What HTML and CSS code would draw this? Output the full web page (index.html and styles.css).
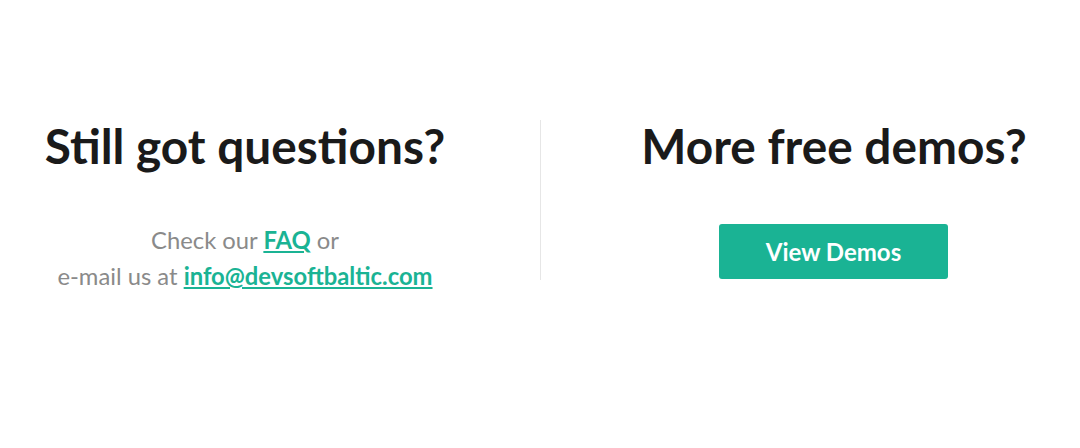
FILE: index.html
```html
<!DOCTYPE html>
<html>
<head>
<meta charset="utf-8">
<link rel="stylesheet" href="styles.css">
</head>
<body>
<section class="cta">
  <div class="col col-left">
    <h2 class="title">Still got questions?</h2>
    <p class="text">Check our <a href="#" class="link">FAQ</a> or<br>e-mail us at <a href="#" class="link">info@devsoftbaltic.com</a></p>
  </div>
  <div class="col col-right">
    <h2 class="title">More free demos?</h2>
    <a href="#" class="btn">View Demos</a>
  </div>
</section>
</body>
</html>
```
FILE: styles.css
```css
html, body {
  margin: 0;
  padding: 0;
  background: #fff;
}
body {
  font-family: Lato, "Open Sans", sans-serif;
  width: 1080px;
  height: 448px;
}
.cta {
  display: flex;
  padding-top: 120px;
}
.col {
  box-sizing: border-box;
  display: flex;
  flex-direction: column;
  align-items: center;
  text-align: center;
}
.col-left {
  width: 541px;
  padding-right: 50px;
  border-right: 1px solid #e6e6e6;
  height: 160px;
}
.col-right {
  flex: 1;
  padding-left: 47px;
}
.title {
  margin: 0;
  font-size: 47.8px;
  font-weight: 700;
  color: #1a1a1a;
  line-height: 52px;
}
.text {
  margin: 50px 0 0;
  font-size: 23.8px;
  line-height: 36px;
  color: #8a8a8a;
}
.link {
  color: #1ab394;
  font-weight: 700;
  text-decoration: underline;
}
.btn {
  margin-top: 52px;
  margin-right: 1px;
  display: flex;
  align-items: center;
  justify-content: center;
  width: 229px;
  height: 55px;
  background: #1ab394;
  color: #fff;
  font-weight: 700;
  font-size: 24px;
  text-decoration: none;
  border-radius: 3px;
}
```
